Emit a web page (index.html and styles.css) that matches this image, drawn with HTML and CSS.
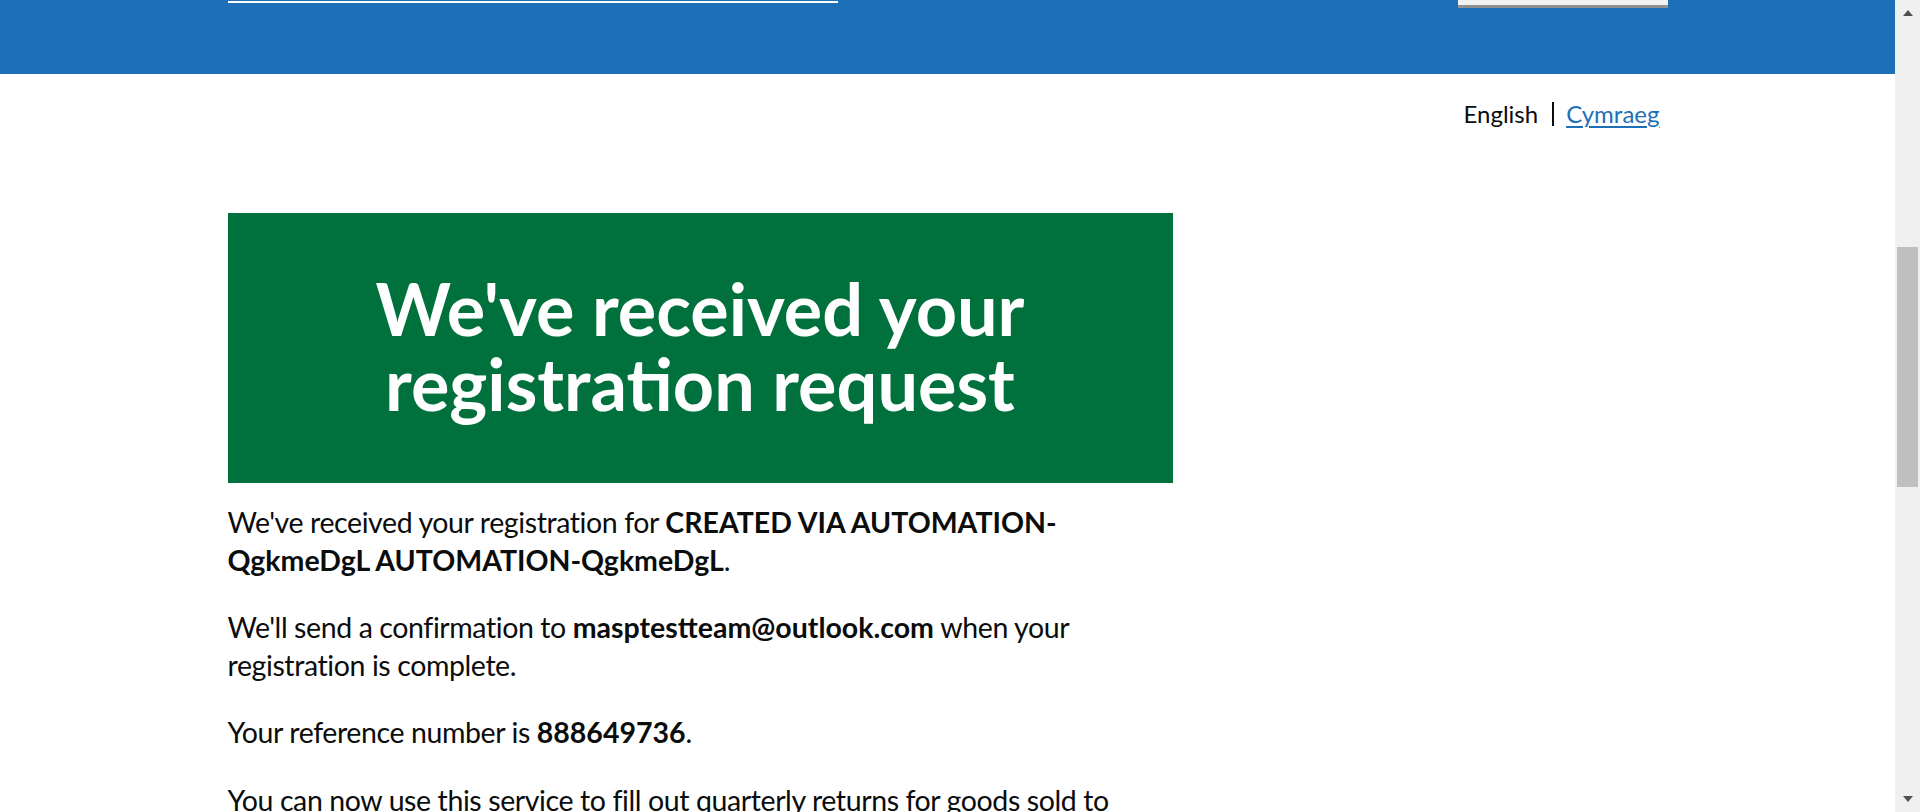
FILE: index.html
```html
<!DOCTYPE html>
<html lang="en">
<head>
<meta charset="utf-8">
<title>Registration received</title>
<link rel="stylesheet" href="styles.css">
</head>
<body>
<div class="viewport">
  <div class="page">
    <header class="top-band">
      <div class="width-container top-band-inner">
        <a class="top-link" href="#" aria-label="Service link"></a>
        <span class="top-button"></span>
      </div>
    </header>

    <div class="width-container">
      <nav class="lang-toggle" aria-label="Language switcher">
        <span class="lang-current">English</span>
        <span class="lang-sep"></span>
        <a class="lang-link" href="#" lang="cy">Cymraeg</a>
      </nav>

      <main class="main">
        <div class="two-thirds">
          <div class="panel">
            <h1 class="panel-title">We've received your registration request</h1>
          </div>
          <p class="body">We've received your registration for <strong>CREATED VIA AUTOMATION-QgkmeDgL AUTOMATION-QgkmeDgL</strong>.</p>
          <p class="body">We'll send a confirmation to <strong>masptestteam@outlook.com</strong> when your registration is complete.</p>
          <p class="body">Your reference number is <strong>888649736</strong>.</p>
          <p class="body">You can now use this service to fill out quarterly returns for goods sold to customers in Northern Ireland.</p>
        </div>
      </main>
    </div>
  </div>

  <div class="scrollbar" aria-hidden="true">
    <div class="sb-btn"><span class="sb-arrow-up"></span></div>
    <div class="sb-track"><div class="sb-thumb"></div></div>
    <div class="sb-btn"><span class="sb-arrow-down"></span></div>
  </div>
</div>
</body>
</html>
```

FILE: styles.css
```css
html, body {
  margin: 0;
  padding: 0;
  height: 812px;
  overflow: hidden;
  background: #ffffff;
}

body {
  font-family: Lato, "Liberation Sans", Arial, sans-serif;
  color: #0b0c0c;
}

.viewport {
  display: flex;
  height: 812px;
}

.page {
  flex: 1;
  min-width: 0;
  overflow: hidden;
}

.width-container {
  max-width: 1440px;
  margin: 0 auto;
}

/* Top blue band (scrolled, only the bottom visible) */
.top-band {
  background: #1d70b8;
  height: 74px;
}

.top-band-inner {
  display: flex;
  justify-content: space-between;
  align-items: flex-start;
}

.top-link {
  display: block;
  width: 610px;
  height: 2px;
  margin-top: 1px;
  background: #ffffff;
}

.top-button {
  display: block;
  width: 210px;
  height: 5px;
  background: #f3f2f1;
  box-shadow: 0 3px 0 #929191;
}

/* Language toggle */
.lang-toggle {
  display: flex;
  justify-content: flex-end;
  align-items: center;
  margin-top: 25px;
  padding-right: 8px;
  font-size: 24px;
  line-height: 30px;
}

.lang-current {
  color: #0b0c0c;
}

.lang-sep {
  display: inline-block;
  width: 0;
  height: 24px;
  border-left: 2px solid #0b0c0c;
  margin: 0 12px 0 14px;
}

.lang-link {
  color: #1d70b8;
  text-decoration: underline;
  text-decoration-thickness: 2px;
  text-underline-offset: 3px;
}

/* Main content */
.main {
  padding-top: 84px;
}

.two-thirds {
  width: 945px;
}

.panel {
  background: #00703c;
  color: #ffffff;
  text-align: center;
  padding: 58px 60px 62px;
  margin-bottom: 21px;
}

.panel-title {
  margin: 0;
  font-size: 72px;
  line-height: 75px;
  font-weight: 700;
}

.body {
  margin: 0 0 30px;
  font-size: 28.5px;
  line-height: 37.5px;
  letter-spacing: -0.4px;
}

.body strong {
  font-weight: 700;
  letter-spacing: 0;
}

/* Fake browser scrollbar */
.scrollbar {
  width: 25px;
  flex: 0 0 25px;
  background: #f0f0f0;
  display: flex;
  flex-direction: column;
}

.sb-btn {
  height: 25px;
  display: flex;
  align-items: center;
  justify-content: center;
}

.sb-arrow-up {
  width: 0;
  height: 0;
  border-left: 5.5px solid transparent;
  border-right: 5.5px solid transparent;
  border-bottom: 6px solid #505050;
  margin-top: 1px;
}

.sb-arrow-down {
  width: 0;
  height: 0;
  border-left: 5.5px solid transparent;
  border-right: 5.5px solid transparent;
  border-top: 6px solid #505050;
  margin-bottom: 1px;
}

.sb-track {
  flex: 1;
}

.sb-thumb {
  margin: 222px 2px 0;
  height: 240px;
  background: #bfbfbf;
}
```
